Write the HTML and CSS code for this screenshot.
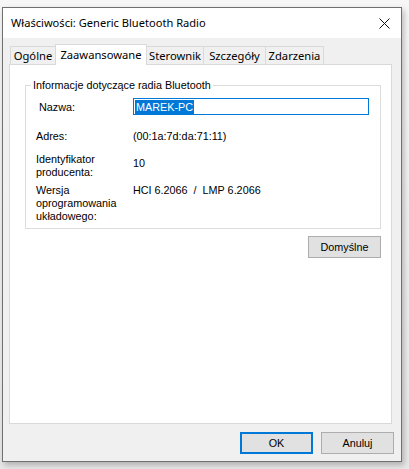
FILE: index.html
```html
<!DOCTYPE html>
<html lang="pl">
<head>
<meta charset="utf-8">
<title>Właściwości: Generic Bluetooth Radio</title>
<link rel="stylesheet" href="styles.css">
</head>
<body>
<div class="desk">
  <div class="win">
    <div class="titlebar">
      <span class="title">Właściwości: Generic Bluetooth Radio</span>
      <svg class="close" width="11" height="11" viewBox="0 0 11 11"><path d="M0.5 0.5L10.5 10.5M10.5 0.5L0.5 10.5" stroke="#111" stroke-width="1" fill="none"/></svg>
    </div>
    <div class="body">
      <div class="tabs">
        <div class="tab t1">Ogólne</div>
        <div class="tab sel">Zaawansowane</div>
        <div class="tab t3">Sterownik</div>
        <div class="tab t4">Szczegóły</div>
        <div class="tab t5">Zdarzenia</div>
      </div>
      <div class="panel">
        <fieldset class="group">
          <legend>Informacje dotyczące radia Bluetooth</legend>
          <div class="row r-name">
            <span class="lbl lbl-name">Nazwa:</span>
            <div class="input"><span class="selected">MAREK-PC</span></div>
          </div>
          <div class="row r-addr">
            <span class="lbl">Adres:</span>
            <span class="val">(00:1a:7d:da:71:11)</span>
          </div>
          <div class="row r-man">
            <span class="lbl">Identyfikator<br>producenta:</span>
            <span class="val v-mid">10</span>
          </div>
          <div class="row r-ver">
            <span class="lbl">Wersja<br>oprogramowania<br>układowego:</span>
            <span class="val">HCI 6.2066&nbsp; / &nbsp;LMP 6.2066</span>
          </div>
        </fieldset>
        <div class="defrow">
          <button class="btn">Domyślne</button>
        </div>
      </div>
      <div class="footer">
        <button class="btn btn-def">OK</button>
        <button class="btn">Anuluj</button>
      </div>
    </div>
  </div>
</div>
</body>
</html>
```
FILE: styles.css
```css
html, body {
  margin: 0;
  padding: 0;
}
body {
  width: 409px;
  height: 469px;
  overflow: hidden;
  background: #ececec;
  font-family: "Liberation Sans", Arial, sans-serif;
  font-size: 10.8px;
  color: #000;
}
.desk {
  padding: 7px 0 0 2px;
  background: linear-gradient(#f7f7f7, #e8e8e8);
  height: 462px;
}
.win {
  width: 398px;
  height: 453px;
  border: 1px solid #707070;
  background: #f0f0f0;
  box-shadow: 2px 3px 6px rgba(0,0,0,0.25);
  display: flex;
  flex-direction: column;
}
.titlebar {
  height: 30px;
  background: #fff;
  display: flex;
  align-items: center;
  justify-content: space-between;
  padding: 0 11px 0 8px;
}
.title {
  font-family: "Noto Sans", "Open Sans", sans-serif;
  font-size: 11.1px;
  color: #000;
  padding-bottom: 1px;
}
.close {
  display: block;
}
.body {
  flex: 1;
  display: flex;
  flex-direction: column;
  padding: 6px 9px 0 6px;
}
.tabs {
  display: flex;
  height: 20px;
  padding-left: 1px;
  align-items: flex-end;
  position: relative;
  z-index: 1;
}
.tab {
  font-family: "Noto Sans", "Open Sans", sans-serif;
  font-size: 11.2px;
  height: 18px;
  line-height: 18px;
  text-align: center;
  border: 1px solid #d9d9d9;
  border-bottom: none;
  margin-left: -1px;
  background: #f0f0f0;
  box-sizing: border-box;
}
.t1 { width: 46px; margin-left: 0; }
.t3 { width: 58px; }
.t4 { width: 63px; }
.t5 { width: 59px; }
.tab.sel {
  width: 92px;
  background: #fff;
  height: 21px;
  line-height: 19px;
  margin-bottom: -1px;
  position: relative;
  z-index: 2;
}
.panel {
  height: 360px;
  background: #fff;
  border: 1px solid #d9d9d9;
  padding: 13px 10px 0 15px;
  box-sizing: border-box;
  display: flex;
  flex-direction: column;
}
.group {
  margin: 0;
  border: 1px solid #dcdcdc;
  padding: 0 10px;
  height: 151px;
  box-sizing: border-box;
}
.group legend {
  padding: 0 2px;
  margin-left: -5px;
  line-height: 14px;
}
.row {
  display: flex;
  align-items: flex-start;
  line-height: 13px;
}
.lbl {
  width: 97px;
  flex: none;
}
.lbl-name {
  padding: 2px 0 0 3px;
  width: 94px;
  line-height: 15px;
}
.r-name {
  margin-top: 6px;
}
.input {
  width: 236px;
  height: 17px;
  border: 1px solid #0078d7;
  box-sizing: border-box;
  padding: 1px 0 0 1px;
}
.selected {
  background: #0078d7;
  color: #fff;
  display: inline-block;
  line-height: 14px;
  padding: 0 1px;
}
.r-addr {
  margin-top: 15px;
}
.r-man {
  margin-top: 10px;
}
.v-mid {
  padding-top: 4px;
}
.r-ver {
  margin-top: 5px;
}
.defrow {
  display: flex;
  justify-content: flex-end;
  margin-top: 7px;
}
.btn {
  width: 73px;
  height: 22px;
  background: #e1e1e1;
  border: 1px solid #adadad;
  font-family: "Liberation Sans", Arial, sans-serif;
  font-size: 10.8px;
  color: #000;
  padding: 0;
  margin: 0;
  box-sizing: border-box;
}
.btn-def {
  border: 2px solid #0078d7;
}
.footer {
  display: flex;
  justify-content: flex-end;
  gap: 8px;
  padding-top: 8px;
  margin-right: -2px;
}
```
